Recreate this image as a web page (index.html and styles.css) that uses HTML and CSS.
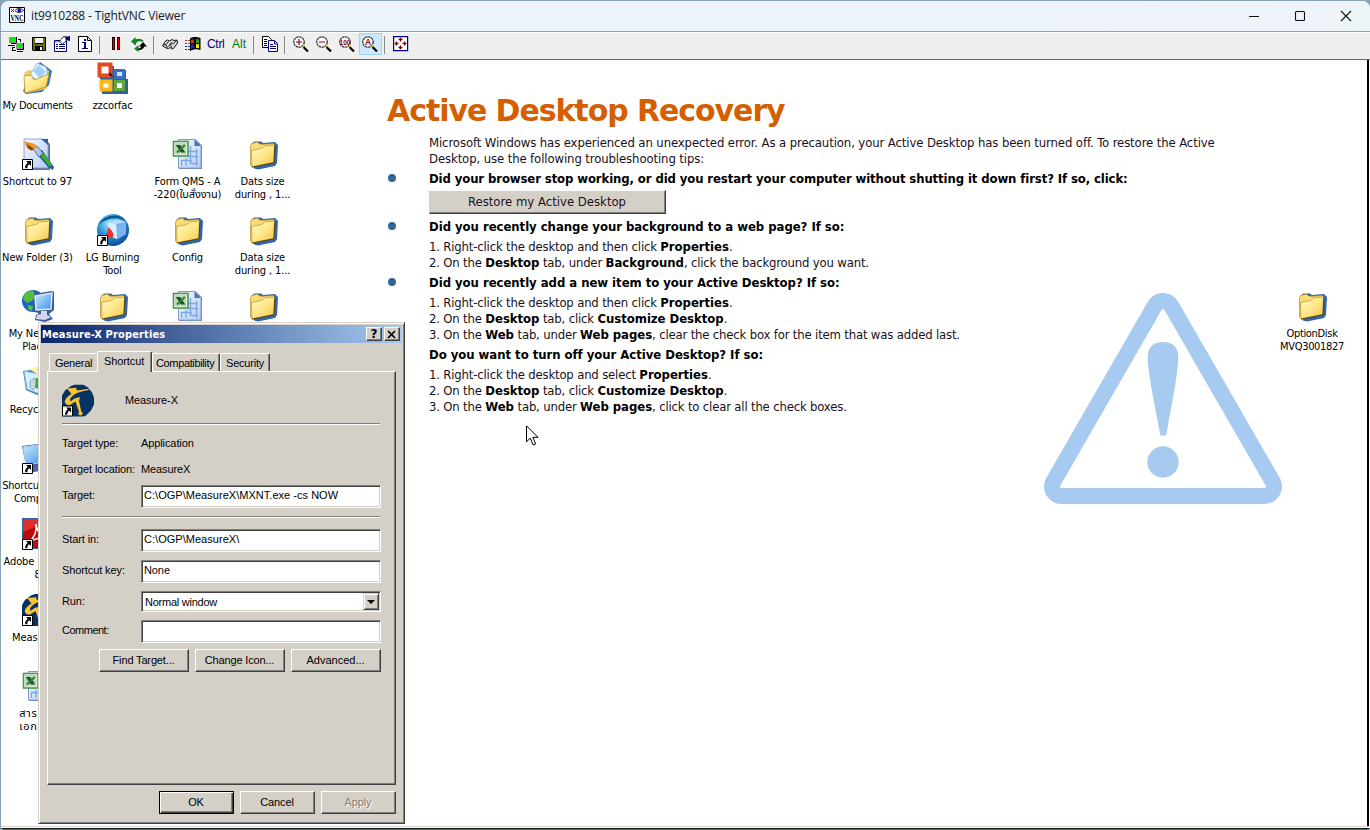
FILE: index.html
```html
<!DOCTYPE html>
<html lang="en">
<head>
<meta charset="utf-8">
<title>it9910288 - TightVNC Viewer</title>
<link rel="stylesheet" href="styles.css">
</head>
<body>
<svg class="defs" width="0" height="0">
  <defs>
    <linearGradient id="gFold" x1="0" y1="0" x2="1" y2="1"><stop offset="0" stop-color="#fffbc8"/><stop offset=".5" stop-color="#ffe78a"/><stop offset="1" stop-color="#f2c649"/></linearGradient>
    <linearGradient id="gPage" x1="0" y1="0" x2="1" y2="1"><stop offset="0" stop-color="#f4f9ff"/><stop offset="1" stop-color="#b5cbf3"/></linearGradient>
    <linearGradient id="gScreen" x1="0" y1="0" x2="1" y2="1"><stop offset="0" stop-color="#c8f0ff"/><stop offset="1" stop-color="#3f8be8"/></linearGradient>
    <radialGradient id="gBlue" cx=".4" cy=".3" r=".7"><stop offset="0" stop-color="#a8ecff"/><stop offset=".5" stop-color="#2f9ad8"/><stop offset="1" stop-color="#0c4f9c"/></radialGradient>
    <symbol id="folder" viewBox="0 0 32 32">
      <path d="M5 6l2-2.500h7l2 1.500 12-1 3 3-1 18-2 3-17 3.500-4-1z" fill="#2f66a8"/>
      <path d="M3.500 9L4.500 5.500l6-1.500 2 2 3 .3L27 5.500V24.500L5.500 29 3.500 27z" fill="#f8dc74" stroke="#b08828" stroke-width=".7"/>
      <path d="M5 28.800L4.500 12.500l10-2 3-2.500 10.200-1-1 17.500z" fill="url(#gFold)" stroke="#c0942c" stroke-width=".7"/>
      <path d="M5 29.200l22-4.500.8-17" fill="none" stroke="#4a3408" stroke-width=".9"/>
    </symbol>
    <symbol id="xls" viewBox="0 0 32 32">
      <path d="M7 1.500h17l6 6V31H7z" fill="#6b87b8"/>
      <path d="M6.500 1.500h16.500l6 6v22.500H6.500z" fill="url(#gPage)" stroke="#7f9ccc" stroke-width="1"/>
      <path d="M22.500 1.500v6.500h6.500z" fill="#4c73b4"/>
      <path d="M9.500 22v6M14 20v8M18.500 8v18M24.500 11v17M9 22.500h11M16 13.500h10M16 18.500h10M19 25.500h7" fill="none" stroke="#7aa7e6" stroke-width="1.300"/>
      <rect x="1.500" y="3.500" width="14.500" height="14.500" fill="#fff" stroke="#4c9450" stroke-width="1.600"/>
      <rect x="3" y="5" width="11.500" height="11.500" fill="#b9dab0"/>
      <path d="M3.800 7h4.500l5 7.500H8.800z" fill="#175c26"/><path d="M12.800 7L5 14.500" stroke="#2f7a3a" stroke-width="2"/>
    </symbol>
    <symbol id="arrow" viewBox="0 0 32 32">
      <path d="M.5 21.500h10v10H.5z" fill="#fff" stroke="#000"/>
      <path d="M4 23h5v5l-1.700-1.700c-1.500 1-2 2-2 4H3.300c-.6-2 .6-3.800 2.400-5.600z" fill="#000"/>
    </symbol>
    <symbol id="mx" viewBox="0 0 32 32">
      <path d="M9 1.500L13 0h8l5 3 4 5 2 5v7l-3 6-5 5-4 2H0V11l3-5z" fill="#063364"/>
      <path d="M5 4l9-.8 1 2.800 12-1.800-.8 1.600C17 7.200 11 9.500 8 14.500l.5 2.500 4-3 5.500-1.500-1 4 2.500 11.500h-2.200L13.500 17 8 20.500c-3 .5-6-2-5-4.500 1-2.700 4-5 6.500-6.500z" fill="#fbc234"/>
      <circle cx="18.500" cy="29" r="2.100" fill="#fbc234"/>
    </symbol>
    <symbol id="lens" viewBox="0 0 16 16">
      <circle cx="6" cy="6" r="5.200" fill="#fff" stroke="#383838" stroke-width="1.300" stroke-dasharray="2.500 .5"/>
      <path d="M10 9.500l1.500 1.500" stroke="#ffe000" stroke-width="2"/><path d="M10.500 11l4.500 4.500" stroke="#000" stroke-width="2.200"/>
    </symbol>
  </defs>
</svg>

<div class="window">
  <header class="titlebar">
    <svg class="app-icon" viewBox="0 0 16 16"><path d="M.5.500h15v15H.5z" fill="#fff" stroke="#000"/><path d="M2 2l3 3M5 2L2 5" stroke="#c00000"/><path d="M6 3.500c2-2.500 6-2.500 8.500 0-2.500 2.500-6.500 2.500-8.500 0z" fill="#fff" stroke="#000" stroke-width=".9"/><circle cx="10.300" cy="3.500" r="1.700" fill="#0000d0"/><text class="vnc-text" x="1.500" y="13.800" textLength="13" lengthAdjust="spacingAndGlyphs">VNC</text></svg>
    <span class="app-title">it9910288 - TightVNC Viewer</span>
    <div class="win-controls">
      <svg viewBox="0 0 12 12"><path d="M1 6.500h10" stroke="#111"/></svg>
      <svg viewBox="0 0 12 12"><rect x="1.500" y="1.500" width="9" height="9" rx="1" fill="none" stroke="#111" stroke-width="1.100"/></svg>
      <svg viewBox="0 0 12 12"><path d="M1 1l10 10M11 1L1 11" stroke="#111" stroke-width="1.100"/></svg>
    </div>
  </header>

  <nav class="toolbar">
    <span class="tool"><svg class="px" viewBox="0 0 16 16"><path d="M1 1h7v6H1z" fill="#909090"/><path d="M2 2h5v4H2z" fill="#00f000"/><path d="M8 1h1v7H3V7h5zM0 9h7v1H0zM4 11h3v1H4zM4 11h1v3h3v1H4zM10 3h3v1h-3zM12 3h1v3h-1z" fill="#000"/><path d="M8 7h7v6H8z" fill="#909090"/><path d="M9 8h5v4H9z" fill="#00f000"/><path d="M15 7h1v7H9v-1h6zM9 15h6v1H9z" fill="#000"/></svg></span>
    <span class="tool"><svg viewBox="0 0 16 16"><path d="M1 1h14v14H2l-1-1z" fill="#000"/><path d="M2 2h2v6h8V2h2v12H2z" fill="#6b6b14"/><path d="M4 2h8v5H4z" fill="#efefef"/><path d="M4 10h8v4H4z" fill="#000"/><path d="M9 11h2v3H9z" fill="#fff"/></svg></span>
    <span class="tool"><svg viewBox="0 0 16 16"><path d="M.5 4.500h12v11H.5z" fill="#fff" stroke="#000070"/><path d="M1 5h11v1.500H1z" fill="#a0a0c0"/><path d="M2 8.500h2m1 0h6M2 10.500h2m1 0h6M2 12.500h2m1 0h6" stroke="#000080"/><path d="M5.500 5l3.500-4 3-.5.500 4-4 3.500-1.500-1z" fill="#fff" stroke="#000" stroke-dasharray="2 .6"/><path d="M11 1l5-1v5l-4-1z" fill="#000080"/></svg></span>
    <span class="tool"><svg viewBox="0 0 16 16"><path d="M1.500.500h9l4 4v11h-13z" fill="#fff" stroke="#000"/><path d="M10.500 1v3.500H14" fill="none" stroke="#000"/><path d="M7 3h2v2H7zM5 6h4v6h2v1H5v-1h2V7H5z" fill="#000080"/></svg></span>
    <i class="sep"></i>
    <span class="tool"><svg viewBox="0 0 16 16"><path d="M4 1h3v13H4zM9 1h3v13H9z" fill="#000"/><path d="M5.500 2v11M10.500 2v11" stroke="#f00000" stroke-width="1.400"/></svg></span>
    <span class="tool"><svg viewBox="0 0 16 16"><path d="M0 5.500L4.500 1v2.500c3-1.200 6.500-.8 8.500 2h-3C8.500 4.800 6.500 5.300 5.500 6.500L4.500 9.500z" fill="#108020"/><path d="M16 10.500L12 6 8 10.500h2.500C9.500 12 8 12.500 7 12.500v1.800c3 0 5-1 6.500-3.800z" fill="#000"/><path d="M7.500 9v7l-4.500-3.300z" fill="#108020"/></svg></span>
    <i class="sep"></i>
    <span class="tool"><svg viewBox="0 0 16 16"><path d="M.6 10L3 5.500 5.500 4l2 1L10 3.500l2 1 3-.5.500 3-4 5.500-2 .3-1.500-1.300-1.500 1-2-.3z" fill="#d4d4d4" stroke="#000" stroke-width=".9"/><path d="M1 8.500l3 .2 1.500 3.600M4 8.500l2.500-3M6.500 10.500L9 7l2.500.5M8.500 8l1 4M11.500 7.500l3-3" fill="none" stroke="#000" stroke-width=".8"/></svg></span>
    <span class="tool"><svg viewBox="0 0 16 16"><path d="M5 2.500c3-2 5-2 10.500-.5v12c-4.500-1-6.500-1-10.500 1z" fill="#000"/><path d="M6 4l3-1v4l-3 1z" fill="#e02020"/><path d="M11 3l3 .3v4l-3-.3z" fill="#20a020"/><path d="M6 9l3-1v4l-3 1z" fill="#2020e0"/><path d="M11 8l3 .3v4l-3-.3z" fill="#f0e000"/><path d="M0 4.500h2m1 0h2M0 7.500h2m1 0h2" stroke="#d02020"/><path d="M0 10.500h2m1 0h2M0 13.500h2m1 0h2" stroke="#2020c0"/></svg></span>
    <span class="tool key ctrl">Ctrl</span>
    <span class="tool key alt">Alt</span>
    <i class="sep"></i>
    <span class="tool"><svg viewBox="0 0 16 16"><path d="M.5.500h6l3 3v8h-9z" fill="#fff" stroke="#000"/><path d="M6.500 4.500h6l3 3v8h-9z" fill="#fff" stroke="#000080"/><path d="M2 3.500h3M2 5.500h3M2 7.500h3M2 9.500h3" stroke="#000"/><path d="M8 8.500h3M8 10.500h6M8 12.500h6M12.500 5v3H15" fill="none" stroke="#000080"/></svg></span>
    <i class="sep"></i>
    <span class="tool"><svg viewBox="0 0 16 16"><use href="#lens"/><path d="M3 6h6M6 3v6" stroke="#900010" stroke-width="1.200"/></svg></span>
    <span class="tool"><svg viewBox="0 0 16 16"><use href="#lens"/><path d="M3 6h6" stroke="#900010" stroke-width="1.200"/></svg></span>
    <span class="tool"><svg viewBox="0 0 16 16"><use href="#lens"/><text class="lens-text" x="0.500" y="8.800" textLength="11" lengthAdjust="spacingAndGlyphs">100</text></svg></span>
    <span class="tool on"><svg viewBox="0 0 16 16"><use href="#lens"/><text class="lens-text big" x="3" y="9">A</text></svg></span>
    <i class="sep"></i>
    <span class="tool"><svg viewBox="0 0 16 16"><path d="M.6.600h14v14H.6z" fill="#fff" stroke="#000080" stroke-width="1.200"/><path d="M7.500 1.500L10 4H5zM7.500 13.500L10 11H5zM1.500 7.500L4 5v5zM13.500 7.500L11 5v5z" fill="#800000"/><path d="M7.500 3v2.500M7.500 9.500V12M3 7.500h2.500M9.500 7.500H12" stroke="#800000" stroke-width="1.600"/></svg></span>
  </nav>

  <main class="desktop">
    <div class="icons">
      <div class="ico c1 r1 tight"><svg viewBox="0 0 32 32"><path d="M8 12L18 0l7 5 5 4-3 14-7 7-16 2-3-3z" fill="#3c74b4"/><path d="M2 11l5-3 4 1 12-4 4 4-3 18-19 4z" fill="#f2ca58"/><path d="M15 1l9 4 2 9-8 7-10-8z" fill="#e9f5ff" stroke="#78a9dc" stroke-width=".7"/><path d="M11 9l6-6 7 7-6 6z" fill="#9fd0fb"/><path d="M2 14l7-1 3 5 15-6-3 13L3 31z" fill="url(#gFold)" stroke="#bd8c20" stroke-width=".8"/></svg><span>My Documents</span></div>
      <div class="ico c2 r1"><svg viewBox="0 0 32 32"><path d="M3 4h14v4h12v9h2v15H5V19l-2-2z" fill="#335f9a"/><path d="M2.500 2.500h11v11h-11z" fill="#fff" stroke="#e5491c" stroke-width="4"/><path d="M18.500 8.500h8v7h-8z" fill="#cfe2ff" stroke="#3b6fc4" stroke-width="3"/><path d="M4.500 19.500h9v8h-9z" fill="#fff" stroke="#f7b818" stroke-width="4"/><path d="M18.500 19.500h8v8h-8z" fill="#fff" stroke="#5fa83c" stroke-width="3.200"/><path d="M13 10l3 5-4-2z" fill="#000"/></svg><span>zzcorfac</span></div>
      <div class="ico c1 r2"><svg viewBox="0 0 32 32"><path d="M3 1h20l5 5v26H3z" fill="#5777aa"/><path d="M2 1h19l5 5v24H2z" fill="url(#gPage)" stroke="#7892c0" stroke-width=".8"/><path d="M19 1h7v6z" fill="#2c5fa5"/><path d="M14 15l6-3 12 17-1 3-5-3z" fill="#275a92"/><path d="M17 16l4-2 9 13-2 2z" fill="#35b035"/><path d="M11 11l4-3 6 7-4 4z" fill="#b4c4e8" stroke="#3b5387" stroke-width=".8"/><path d="M2 3c5 2 9 1 13 5l-4 4C4 12 4 8 2 3z" fill="#e9992c"/><path d="M5 6l7 5-2 1.500C7 12 5.500 9 5 6z" fill="#8a3b10"/><use href="#arrow"/></svg><span>Shortcut to 97</span></div>
      <div class="ico c3 r2"><svg><use href="#xls"/></svg><span>Form QMS - A<br>-220(ใบสั่งงาน)</span></div>
      <div class="ico c4 r2"><svg><use href="#folder"/></svg><span>Dats size<br>during , 1...</span></div>
      <div class="ico c1 r3"><svg><use href="#folder"/></svg><span>New Folder (3)</span></div>
      <div class="ico c2 r3"><svg viewBox="0 0 32 32"><circle cx="16" cy="16" r="16" fill="url(#gBlue)"/><path d="M2 10C8 0 22-1 28 6c-8-3-18-2-26 4z" fill="#0d5394"/><path d="M11 9l9-4 9 3v12l-9 5-9-4z" fill="#b8dcff"/><path d="M19 10l10-2v12l-9 5z" fill="#7cb2ee"/><path d="M11 9l8 1 1 15-9-4z" fill="#d9eeff"/><path d="M11 13c4 3 6 6 5 10l-6 2c-3-4 2-7 1-12z" fill="#e8352c"/><use href="#arrow"/></svg><span>LG Burning<br>Tool</span></div>
      <div class="ico c3 r3"><svg><use href="#folder"/></svg><span>Config</span></div>
      <div class="ico c4 r3"><svg><use href="#folder"/></svg><span>Data size<br>during , 1...</span></div>
      <div class="ico c1 r4"><svg viewBox="0 0 32 32"><circle cx="11" cy="11" r="11" fill="#1b62c4"/><path d="M3 3l7-3 4 5-4 6-5 2-4-4zM6 15l5 1-1 5-4-2z" fill="#52c03a"/><path d="M12 4l18-3 2 1v18l-5 4 4 5-8 3-10-2 1-5 3-2-5-1z" fill="#3b5b9c"/><path d="M13 6l17-3-1 16-15 1z" fill="url(#gScreen)" stroke="#e3ecfb" stroke-width="1.400"/><path d="M19 21l6 0 0 4 4 2-6 3-9-1 1-4 4-1z" fill="#d4d7ee"/></svg><span>My Network<br>Places</span></div>
      <div class="ico c2 r4"><svg><use href="#folder"/></svg></div>
      <div class="ico c3 r4"><svg><use href="#xls"/></svg></div>
      <div class="ico c4 r4"><svg><use href="#folder"/></svg></div>
      <div class="ico c1 r5"><svg viewBox="0 0 32 32"><path d="M1 5l16-2 12 4-4 19-10 3-11-5z" fill="#3f82c4"/><path d="M2 5l15 3 11-2-4 18-9 3-10-4z" fill="#d8edff" stroke="#7eb4e4"/><path d="M7 3l8-3 10 4-8 5z" fill="#fff3b0"/><path d="M8 15l5-3 3 7-5 5-3-3z" fill="#ccd6e2" stroke="#8fa5bd"/><path d="M14 12l5 1-3 10-3-2z" fill="#35ad32"/></svg><span>Recycle Bin</span></div>
      <div class="ico c1 r6"><svg viewBox="0 0 32 32"><path d="M0 4l24-3 6 3v22L5 29z" fill="#365f9c"/><path d="M1 5l22-3v18L4 23z" fill="url(#gScreen)" stroke="#a9cbed"/><path d="M5 25l20-3v6L5 31z" fill="#565da8"/><use href="#arrow"/></svg><span class="snug">Shortcut to my<br>Computer</span></div>
      <div class="ico c1 r7"><svg viewBox="0 0 32 32"><path d="M0 0h32v31H0z" fill="#2e66a3"/><path d="M1 1h30v29H1z" fill="#b90c10"/><path d="M1 1h30L1 14z" fill="#e02c2c"/><path d="M7 24c6-5 8-11 7-18 1 8 6 13 13 14-8-1-13 0-20 4z" fill="none" stroke="#fff" stroke-width="1.500"/><use href="#arrow"/></svg><span>Adobe Reader<br>8</span></div>
      <div class="ico c1 r8"><svg viewBox="0 0 32 32"><use href="#mx"/><use href="#arrow"/></svg><span>Measure-X</span></div>
      <div class="ico c1 r9"><svg><use href="#xls"/></svg><span class="thai">สารบัญ<br>เอกสาร</span></div>
    </div>

    <div class="ico option-disk tight"><svg><use href="#folder"/></svg><span>OptionDisk<br>MVQ3001827</span></div>

    <article class="recovery">
      <h1>Active Desktop Recovery</h1>
      <p class="intro">Microsoft Windows has experienced an unexpected error. As a precaution, your Active Desktop has been turned off. To restore the Active<br>Desktop, use the following troubleshooting tips:</p>
      <h2 class="dot long">Did your browser stop working, or did you restart your computer without shutting it down first? If so, click:</h2>
      <button class="restore">Restore my Active Desktop</button>
      <h2 class="dot">Did you recently change your background to a web page? If so:</h2>
      <p class="steps">1. Right-click the desktop and then click <b>Properties</b>.<br>2. On the <b>Desktop</b> tab, under <b>Background</b>, click the background you want.</p>
      <h2 class="dot">Did you recently add a new item to your Active Desktop? If so:</h2>
      <p class="steps">1. Right-click the desktop and then click <b>Properties</b>.<br>2. On the <b>Desktop</b> tab, click <b>Customize Desktop</b>.<br>3. On the <b>Web</b> tab, under <b>Web pages</b>, clear the check box for the item that was added last.</p>
      <h2>Do you want to turn off your Active Desktop? If so:</h2>
      <p class="steps">1. Right-click the desktop and select <b>Properties</b>.<br>2. On the <b>Desktop</b> tab, click <b>Customize Desktop</b>.<br>3. On the <b>Web</b> tab, under <b>Web pages</b>, click to clear all the check boxes.</p>
    </article>

    <svg class="warning" viewBox="1044 293 238 211">
      <path d="M1163 310.500l101.500 176h-203z" fill="#a6caf0" stroke="#a6caf0" stroke-width="35" stroke-linejoin="round"/>
      <path d="M1163 310.500l101.500 176h-203z" fill="#fff" stroke="#fff" stroke-width="3" stroke-linejoin="round"/>
      <path d="M1147.700 357c0-10 6-15 15.300-15s15.300 5 15.300 15c0 10-3 30-12.300 78.500h-5.500c-9.800-48.500-12.800-68.500-12.800-78.500z" fill="#a6caf0"/>
      <circle cx="1163" cy="462" r="15.700" fill="#a6caf0"/>
    </svg>

    <svg class="cursor" viewBox="0 0 13 21"><path d="M.5.800v16l3.700-3.600 3 6.800 2.500-1-2.900-6.700h5.200z" fill="#fff" stroke="#000"/></svg>

    <section class="dialog">
      <div class="dlg-title"><span>Measure-X Properties</span><i class="cap">?</i><i class="cap"><svg viewBox="0 0 10 9"><path d="M1 1l7 7M8 1L1 8" stroke="#000" stroke-width="1.700"/></svg></i></div>
      <div class="tabs"><span class="tab t1">General</span><span class="tab t2 active">Shortcut</span><span class="tab t3">Compatibility</span><span class="tab t4">Security</span></div>
      <div class="panel">
        <div class="head"><svg viewBox="0 0 32 32"><use href="#mx"/><use href="#arrow"/></svg><span>Measure-X</span></div>
        <hr>
        <div class="row plain"><label>Target type:</label><span>Application</span></div>
        <div class="row plain"><label>Target location:</label><span>MeasureX</span></div>
        <div class="row r-target"><label>Target:</label><div class="field path">C:\OGP\MeasureX\MXNT.exe -cs NOW</div></div>
        <hr>
        <div class="row r-start"><label>Start in:</label><div class="field path">C:\OGP\MeasureX\</div></div>
        <div class="row r-key"><label>Shortcut key:</label><div class="field">None</div></div>
        <div class="row r-run"><label>Run:</label><div class="field combo"><span>Normal window</span><i class="drop"></i></div></div>
        <div class="row r-comment"><label class="comment">Comment:</label><div class="field"></div></div>
        <div class="buttons"><button>Find Target...</button><button>Change Icon...</button><button class="wide">Advanced...</button></div>
      </div>
      <div class="footer"><button class="default">OK</button><button>Cancel</button><button class="disabled">Apply</button></div>
    </section>
  </main>
  <footer class="edge"></footer>
</div>
</body>
</html>
```
FILE: styles.css
```css
* { box-sizing: border-box; }
body { margin: 0; height: 830px; overflow: hidden; background: #87a3b3; }
.defs { position: absolute; }

.window {
  width: 1369px; height: 829px; margin: 1px 0 0 1px;
  display: flex; flex-direction: column;
  background: #fff; border-radius: 8px 8px 4px 4px; overflow: hidden;
}
.titlebar {
  height: 31px; flex: none; display: flex; align-items: center; padding: 0 18px 2px 8px;
  background: linear-gradient(90deg, #ebf3fb, #eef3fa 80%, #edf4f8);
  border-bottom: 1px solid #9b9fa3;
}
.app-icon { width: 16px; height: 16px; margin-right: 6px; overflow: visible; }
.vnc-text { font: bold 8px "Liberation Serif", serif; }
.app-title { padding-top: 2px; font: 12px/16px "Open Sans", "Noto Sans", sans-serif; letter-spacing: -0.14px; color: #1a1a1a; }
.win-controls { margin-left: auto; display: flex; gap: 34px; }
.win-controls svg { width: 12px; height: 12px; margin-top: 1px; }

.toolbar {
  height: 28px; flex: none; display: flex; align-items: center; padding-left: 4px;
  background: #efefef; border-top: 1px solid #fff; border-bottom: 1px solid #696969;
}
.tool { width: 23px; height: 22px; margin-top: -5px; padding: 3px 0 0 3px; }
.tool svg { display: block; width: 16px; height: 16px; }
.px { shape-rendering: crispEdges; }
.tool.on { background: #cce8ff; border: 1px solid #99d1ff; padding: 2px 0 0 2px; }
.sep { width: 8px; height: 18px; margin-top: -3px; background: linear-gradient(#8a8a8a, #8a8a8a) 2px 0 / 1px 100% no-repeat; }
.key { font: 12px/17px "Liberation Sans", Arial, sans-serif; padding-left: 2px; white-space: nowrap; letter-spacing: -0.3px; }
.ctrl { color: #000080; }
.alt { color: #008000; padding-left: 4px; letter-spacing: 0; }
.lens-text { font: bold 7.500px "Liberation Sans", sans-serif; fill: #900010; }
.lens-text.big { font-size: 8.500px; }

.desktop { position: relative; flex: 1; border-right: 2px solid #000; background: #fff; margin-right: 1px; }
.edge { height: 4px; flex: none; background: linear-gradient(#d8cfd2 0 1px, #fff 1px 2px, #111 2px 3px, #54705e 3px); }
.icons {
  position: absolute; left: -1px; top: 2px;
  display: grid; grid-template-columns: repeat(4, 75px); grid-template-rows: repeat(9, 76px);
}
.ico { display: flex; flex-direction: column; align-items: center; }
.ico svg { width: 32px; height: 32px; flex: none; }
.ico span {
  margin-top: 5px; text-align: center; white-space: nowrap; letter-spacing: -0.12px;
  font: 11px/13px "DejaVu Sans Condensed", "Noto Sans Thai", sans-serif; color: #000;
}
.ico.tight span { letter-spacing: -0.32px; }
.ico .snug { letter-spacing: -0.25px; }
.ico .thai { letter-spacing: 0.7px; }
.c1 { grid-column: 1; } .c2 { grid-column: 2; } .c3 { grid-column: 3; } .c4 { grid-column: 4; }
.r1 { grid-row: 1; } .r2 { grid-row: 2; } .r3 { grid-row: 3; } .r4 { grid-row: 4; } .r5 { grid-row: 5; }
.r6 { grid-row: 6; } .r7 { grid-row: 7; } .r8 { grid-row: 8; } .r9 { grid-row: 9; }
.option-disk { position: absolute; left: 1273px; top: 230px; width: 76px; }

.recovery {
  position: absolute; left: 386px; top: 32px; padding-left: 42px;
  display: flex; flex-direction: column; gap: 4px; white-space: nowrap;
  font: 13px/16px "DejaVu Sans Condensed", "DejaVu Sans", sans-serif; letter-spacing: -0.11px;
}
.recovery h1 { margin: 0 0 0 -42px; font: bold 30px/38px "DejaVu Sans", sans-serif; letter-spacing: -1.06px; color: #d45f00; }
.recovery h2, .recovery p { margin: 0; font-size: inherit; line-height: 14px; padding-top: 2px; color: #000; }
.recovery h2 { letter-spacing: -0.04px; }
.recovery .long { letter-spacing: -0.113px; }
.recovery p { padding-top: 1px; margin-bottom: -1px; line-height: 16px; color: #1a1020; }
.recovery .steps { letter-spacing: -0.18px; }
.recovery b { color: #000; letter-spacing: -0.04px; }
.dot { position: relative; }
.dot::before {
  content: ""; position: absolute; left: -41px; top: 4px;
  width: 8px; height: 8px; border-radius: 50%; background: #336699;
}
.restore {
  width: 237px; height: 24px; padding: 0 1px 0 0; font: inherit; letter-spacing: 0; color: #1a1020; background: #d4d0c8;
  border: 1px solid; border-color: #fff #404040 #404040 #d4d0c8; box-shadow: inset -1px -1px #808080;
}
.warning { position: absolute; left: 1043px; top: 233px; width: 238px; height: 211px; }
.cursor { position: absolute; left: 525px; top: 365px; width: 13px; height: 21px; }

.dialog {
  position: absolute; left: 37px; top: 262px; width: 367px; height: 502px; padding: 1px;
  background: #d4d0c8; border: 1px solid; border-color: #d4d0c8 #404040 #404040 #d4d0c8;
  box-shadow: inset 1px 1px #fff, inset -1px -1px #808080;
  font: 11px/13px "Liberation Sans", Arial, sans-serif; letter-spacing: -0.1px; color: #000;
}
.dlg-title {
  height: 18px; margin: 1px; padding: 0 2px 0 1px; display: flex; align-items: center;
  background: linear-gradient(90deg, #0a246a, #a6caf0);
  font: bold 11px/18px "DejaVu Sans Condensed", sans-serif; letter-spacing: 0.15px; color: #fff;
}
.dlg-title span { flex: 1; padding-top: 1px; }
.cap {
  width: 16px; height: 14px; margin-left: 2px; display: grid; place-items: center;
  font: bold 12px/12px "DejaVu Sans", sans-serif; color: #000; background: #d4d0c8;
  border: 1px solid; border-color: #fff #404040 #404040 #fff; box-shadow: inset -1px -1px #808080;
}
.cap svg { width: 10px; height: 9px; }
.tabs { height: 27px; padding: 7px 0 0 9px; display: flex; align-items: flex-end; }
.tab {
  height: 18px; line-height: 19px; padding-left: 5px; white-space: nowrap;
  border: 1px solid; border-color: #fff #404040 transparent #fff; border-bottom: 0;
  border-radius: 2px 2px 0 0; box-shadow: inset -1px 0 #808080;
}
.t1 { width: 48px; border-right: 0; box-shadow: none; letter-spacing: -0.28px; }
.t2 { width: 55px; height: 21px; margin-bottom: -1px; padding-left: 6px; background: #d4d0c8; position: relative; }
.t3 { width: 68px; padding-left: 3px; letter-spacing: -0.36px; }
.t4 { width: 50px; letter-spacing: -0.2px; }
.panel {
  height: 414px; margin: 0 7px; padding: 0 14px;
  border: 1px solid; border-color: #fff #404040 #404040 #fff; box-shadow: inset -1px -1px #808080;
}
.head { height: 51px; display: flex; padding-top: 12px; }
.head svg { width: 32px; height: 33px; margin-right: 31px; }
.head span { margin-top: 10px; }
hr { height: 2px; width: 318px; margin: 0; border: 0; border-top: 1px solid #808080; background: #fff; }
.row { display: flex; width: 319px; }
.row label { width: 79px; flex: none; white-space: nowrap; }
.row .comment { letter-spacing: -0.5px; }
.plain { height: 26px; padding-top: 12px; }
.field {
  flex: 1; height: 23px; background: #fff; padding: 3px 0 0 2px; white-space: nowrap;
  border: 1px solid; border-color: #808080 #fff #fff #808080; box-shadow: inset 1px 1px #404040, inset -1px -1px #d4d0c8;
}
.path { letter-spacing: 0.03px; }
.r-target { margin-top: 8px; padding-bottom: 8px; }
.r-target label, .r-start label, .r-key label { padding-top: 4px; }
.r-start { margin-top: 11px; }
.r-key { margin-top: 8px; }
.r-run { margin-top: 8px; }
.r-run label, .r-comment label { padding-top: 4px; }
.r-comment { margin-top: 8px; }
.combo { height: 21px; padding: 1px; display: flex; letter-spacing: -0.24px; }
.combo span { flex: 1; padding: 3px 0 0 2px; }
.drop {
  width: 16px; height: 17px; background: #d4d0c8; display: grid; place-items: center;
  border: 1px solid; border-color: #d4d0c8 #404040 #404040 #d4d0c8; box-shadow: inset 1px 1px #fff, inset -1px -1px #808080;
}
.drop::before { content: ""; border: 4px solid transparent; border-top-color: #000; border-bottom: 0; }
.buttons, .footer { display: flex; gap: 6px; }
.buttons { margin: 6px 0 0 37px; }
.dialog button {
  width: 90px; height: 23px; padding: 0 1px 1px 0; font: inherit; letter-spacing: -0.15px; color: #000; background: #d4d0c8;
  border: 1px solid; border-color: #fff #404040 #404040 #fff; box-shadow: inset -1px -1px #808080;
}
.dialog .wide { letter-spacing: 0; }
.footer { margin: 6px 0 0 119px; }
.dialog .footer button { width: 75px; }
.dialog .footer .default { border-color: #000; box-shadow: inset 1px 1px #fff, inset -1px -1px #404040, inset -2px -2px #808080; }
.dialog .footer .disabled { color: #808080; text-shadow: 1px 1px #fff; }
```
